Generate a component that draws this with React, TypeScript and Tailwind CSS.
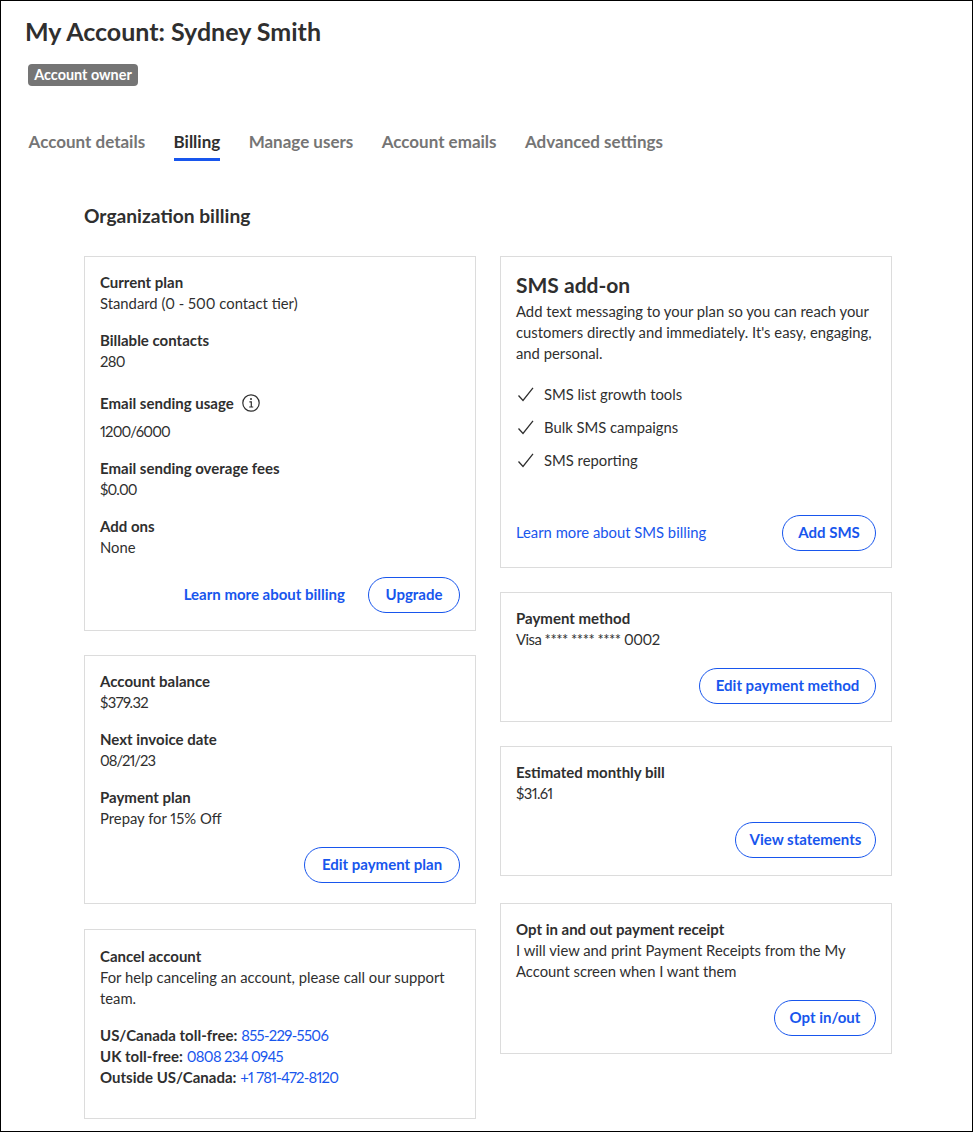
import React from 'react';

const Card: React.FC<{ className: string; children: React.ReactNode }> = ({ className, children }) => (
  <div className={`border border-[#dcdcdc] bg-white px-[15px] ${className}`}>{children}</div>
);

const Label: React.FC<{ children: React.ReactNode }> = ({ children }) => (
  <div className="text-[15px] font-bold leading-[21px]">{children}</div>
);

const Field: React.FC<{ label: string; value: string; className?: string; valueClass?: string }> = ({ label, value, className = '', valueClass = '' }) => (
  <div className={className}>
    <Label>{label}</Label>
    <div className={`leading-[21px] ${valueClass}`}>{value}</div>
  </div>
);

const Btn: React.FC<{ children: React.ReactNode; className: string }> = ({ children, className }) => (
  <button className={`h-9 rounded-full border border-[#1856ed] bg-white pb-[2px] text-center text-[15px] font-bold text-[#1856ed] ${className}`}>
    {children}
  </button>
);

const Tab: React.FC<{ label: string; active?: boolean }> = ({ label, active }) => (
  <div className={`h-[33px] border-b-[3px] pt-[3px] text-[17px] font-bold leading-[22px] ${active ? 'border-[#1856ed] text-[#2f2f2f]' : 'border-transparent text-[#757575]'}`}>
    {label}
  </div>
);

const Tick = () => (
  <svg width="16" height="15" viewBox="0 0 16 15" fill="none" stroke="#2f2f2f" strokeWidth="1.3" className="ml-[2px]">
    <path d="M0.5 8.5L5 13.5L15 0.8" />
  </svg>
);

export default function App() {
  return (
    <div className="h-[1132px] w-[973px] overflow-hidden border border-black bg-white pt-[15px] font-['Lato',sans-serif] text-[14.8px] text-[#2f2f2f] proportional-nums">
      <h1 className="ml-[24px] text-[25px] font-bold leading-[30px]">My Account: Sydney Smith</h1>
      <div className="ml-[27px] mt-[18px] flex h-[22px] w-[110px] items-center justify-center rounded-[4px] bg-[#757575] text-[14.4px] font-bold text-white">
        Account owner
      </div>
      <div className="ml-[27.6px] mt-[42px] flex gap-[28.4px]">
        <Tab label="Account details" />
        <Tab label="Billing" active />
        <Tab label="Manage users" />
        <Tab label="Account emails" />
        <Tab label="Advanced settings" />
      </div>
      <h2 className="ml-[83px] mt-[43px] text-[19.2px] font-bold leading-[24px]">Organization billing</h2>
      <div className="ml-[83px] mt-[28px] flex gap-[24px]">
        <div className="flex w-[392px] flex-col">
          <Card className="h-[375px] pt-[15px]">
            <Field label="Current plan" value="Standard (0 - 500 contact tier)" />
            <Field label="Billable contacts" value="280" valueClass="tracking-[-0.7px]" className="mt-[16px]" />
            <div className="mt-[19px] flex h-[24px] items-center gap-[8px] text-[15px] font-bold">
              Email sending usage
              <svg width="18" height="18" viewBox="0 0 18 18" fill="none" stroke="#2f2f2f">
                <circle cx="9" cy="9" r="8.2" strokeWidth="1.2" />
                <path d="M7.4 7.8H9.3V13M7.2 13H11.2" strokeWidth="1.2" />
                <circle cx="9" cy="5" r="1" fill="#2f2f2f" stroke="none" />
              </svg>
            </div>
            <div className="mt-[6px] leading-[21px] tracking-[-0.8px]">1200/6000</div>
            <Field label="Email sending overage fees" value="$0.00" valueClass="tracking-[-0.8px]" className="mt-[16px]" />
            <Field label="Add ons" value="None" className="mt-[16px]" />
            <div className="mt-[19px] flex items-center justify-end gap-[23px]">
              <a className="pb-[2px] text-[15px] font-bold text-[#1856ed]">Learn more about billing</a>
              <Btn className="w-[92px]">Upgrade</Btn>
            </div>
          </Card>
          <Card className="mt-[24px] h-[249px] pt-[15px]">
            <Field label="Account balance" value="$379.32" valueClass="tracking-[-0.6px]" />
            <Field label="Next invoice date" value="08/21/23" valueClass="tracking-[-1px]" className="mt-[16px]" />
            <Field label="Payment plan" value="Prepay for 15% Off" className="mt-[16px]" />
            <div className="mt-[18px] flex justify-end">
              <Btn className="w-[156px]">Edit payment plan</Btn>
            </div>
          </Card>
          <Card className="mt-[25px] h-[190px] pt-[16px]">
            <Label>Cancel account</Label>
            <div className="leading-[21px]">For help canceling an account, please call our support team.</div>
            <div className="mt-[16px] leading-[21px]">
              <div><b className="text-[15px]">US/Canada toll-free:</b> <a className="tracking-[-0.65px] text-[#1856ed]">855-229-5506</a></div>
              <div><b className="text-[15px]">UK toll-free:</b> <a className="tracking-[-0.65px] text-[#1856ed]">0808 234 0945</a></div>
              <div><b className="text-[15px]">Outside US/Canada:</b> <a className="tracking-[-0.75px] text-[#1856ed]">+1 781-472-8120</a></div>
            </div>
          </Card>
        </div>
        <div className="flex w-[392px] flex-col">
          <Card className="h-[312px] pt-[14px]">
            <h3 className="text-[21px] font-bold leading-[28px]">SMS add-on</h3>
            <p className="mt-[2px] leading-[21px]">
              Add text messaging to your plan so you can reach your customers directly and immediately. It's easy, engaging, and personal.
            </p>
            <ul className="mt-[20px] flex flex-col gap-[12px]">
              {['SMS list growth tools', 'Bulk SMS campaigns', 'SMS reporting'].map((item) => (
                <li key={item} className="flex h-[21px] items-center gap-[10px] leading-[21px]">
                  <Tick />
                  {item}
                </li>
              ))}
            </ul>
            <div className="mt-[44px] flex items-center justify-between">
              <a className="pb-[2px] text-[#1856ed]">Learn more about SMS billing</a>
              <Btn className="w-[94px]">Add SMS</Btn>
            </div>
          </Card>
          <Card className="mt-[24px] h-[130px] pt-[15px]">
            <Field label="Payment method" value="Visa **** **** **** 0002" valueClass="tracking-[-0.5px]" />
            <div className="mt-[18px] flex justify-end">
              <Btn className="w-[177px]">Edit payment method</Btn>
            </div>
          </Card>
          <Card className="mt-[24px] h-[130px] pt-[15px]">
            <Field label="Estimated monthly bill" value="$31.61" valueClass="tracking-[-0.6px]" />
            <div className="mt-[18px] flex justify-end">
              <Btn className="w-[141px]">View statements</Btn>
            </div>
          </Card>
          <Card className="mt-[27px] h-[151px] pt-[15px]">
            <Label>Opt in and out payment receipt</Label>
            <div className="leading-[21px]">I will view and print Payment Receipts from the My Account screen when I want them</div>
            <div className="mt-[18px] flex justify-end">
              <Btn className="w-[102px]">Opt in/out</Btn>
            </div>
          </Card>
        </div>
      </div>
    </div>
  );
}
